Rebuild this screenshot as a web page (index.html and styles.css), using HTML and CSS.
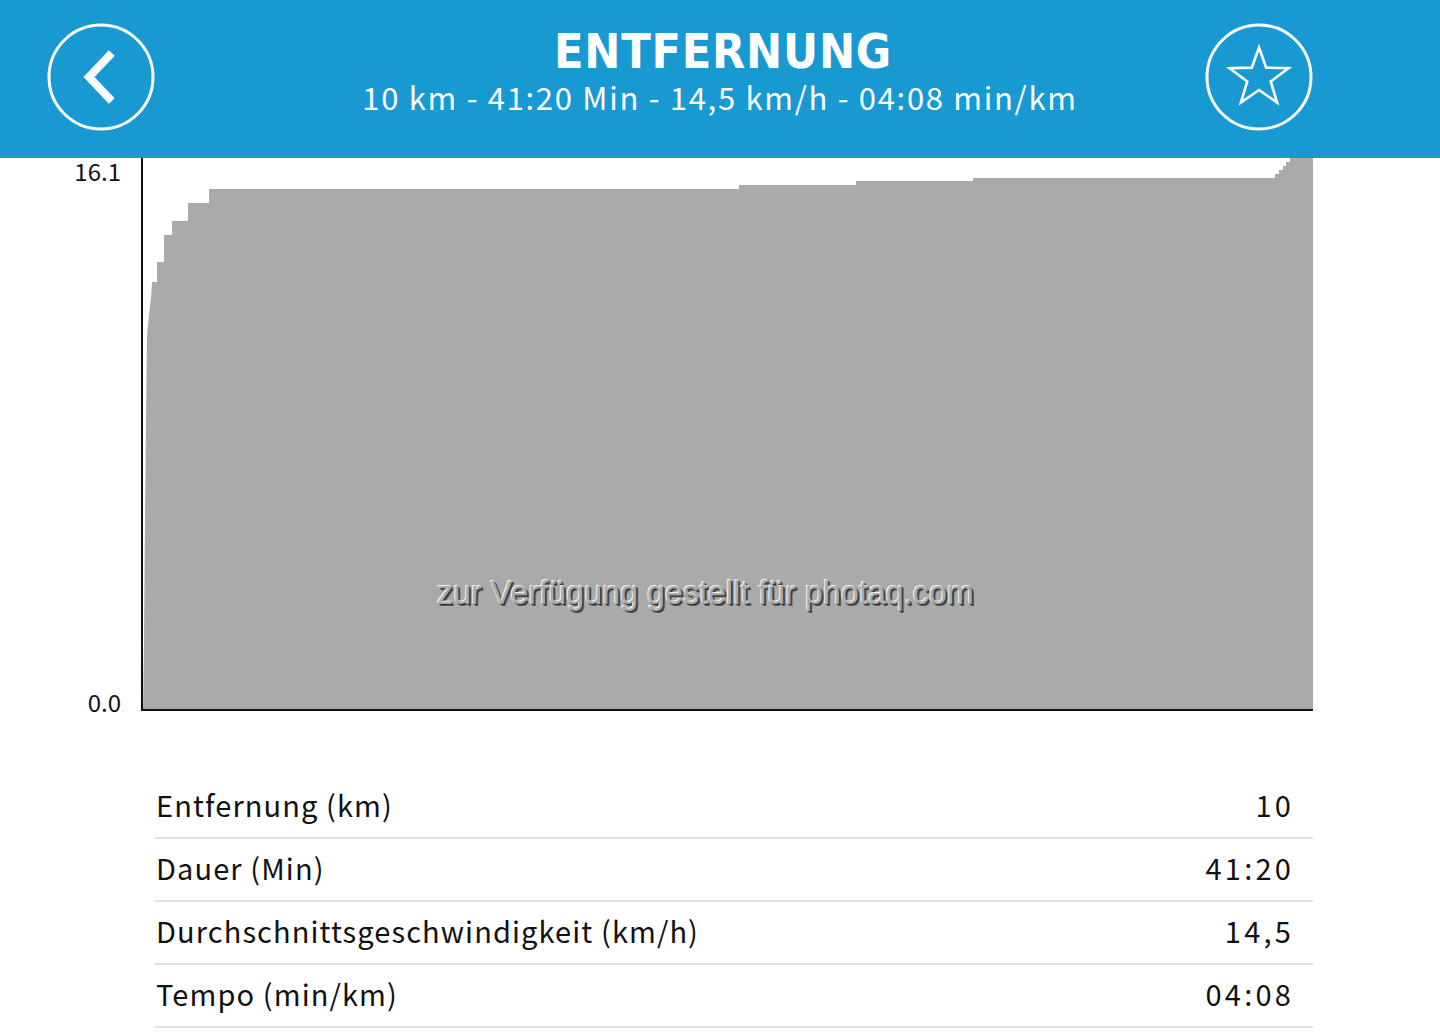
FILE: index.html
```html
<!DOCTYPE html>
<html lang="de">
<head>
    <meta charset="UTF-8">
    <meta name="viewport" content="width=device-width, initial-scale=1.0">
    <title>Entfernung</title>
    <link rel="stylesheet" href="styles.css">
</head>
<body>
    <header class="top-bar">
        <div class="bar-left">
            <button class="round-btn" aria-label="Zurück">
                <svg width="110" height="110" viewBox="0 0 110 110">
                    <circle cx="55" cy="55" r="52" fill="none" stroke="#fff" stroke-width="3"/>
                    <polyline points="63,34 43,55 63,76" fill="none" stroke="#fff" stroke-width="8" stroke-linecap="square" stroke-linejoin="miter"/>
                </svg>
            </button>
        </div>
        <div class="bar-title">
            <h1>ENTFERNUNG</h1>
            <p>10 km - 41:20 Min - 14,5 km/h - 04:08 min/km</p>
        </div>
        <div class="bar-right">
            <button class="round-btn" aria-label="Favorit">
                <svg width="110" height="110" viewBox="0 0 110 110">
                    <circle cx="55" cy="55" r="52" fill="none" stroke="#fff" stroke-width="3"/>
                    <polygon points="55,25.5 62.2,45.6 84.5,46.2 66.7,59.5 73.1,80.5 55,68 36.9,80.5 43.3,59.5 25.5,46.2 47.8,45.6" fill="none" stroke="#fff" stroke-width="2.6" stroke-linejoin="miter"/>
                </svg>
            </button>
        </div>
    </header>

    <section class="chart">
        <div class="y-labels">
            <span>16.1</span>
            <span>0.0</span>
        </div>
        <div class="plot">
            <svg width="1173" height="555" viewBox="141 158 1173 555">
                <polygon fill="#aaaaaa" points="143,710 144,640 145,520 146,420 147,335 149,315 151,298 152,282 157,282 157,262 164,262 164,235 172,235 172,221 188,221 188,203 209,203 209,189 739,189 739,185 856,185 856,181 973,181 973,178 1275,178 1275,174 1279,174 1279,170 1283,170 1283,166 1286,166 1286,162 1290,162 1290,158 1313,158 1313,710"/>
                <line x1="142" y1="158" x2="142" y2="711" stroke="#111" stroke-width="2"/>
                <line x1="141" y1="710" x2="1313" y2="710" stroke="#111" stroke-width="2"/>
            </svg>
            <div class="watermark">zur Verfügung gestellt für photaq.com</div>
        </div>
    </section>

    <section class="stats">
        <div class="stat-row">
            <span>Entfernung (km)</span>
            <span class="value">10</span>
        </div>
        <div class="stat-row">
            <span>Dauer (Min)</span>
            <span class="value">41:20</span>
        </div>
        <div class="stat-row">
            <span>Durchschnittsgeschwindigkeit (km/h)</span>
            <span class="value">14,5</span>
        </div>
        <div class="stat-row">
            <span>Tempo (min/km)</span>
            <span class="value">04:08</span>
        </div>
    </section>
</body>
</html>
```

FILE: styles.css
```css
body {
    margin: 0;
    font-family: "Noto Sans CJK JP", "Noto Sans", sans-serif;
    background-color: #fff;
    color: #111;
    overflow: hidden;
}
.top-bar {
    height: 158px;
    background-color: #1899d1;
    display: grid;
    grid-template-columns: 1fr auto 1fr;
    align-items: center;
    color: #fff;
}
.bar-left {
    padding-left: 46px;
    padding-bottom: 4px;
}
.bar-right {
    justify-self: end;
    padding-right: 126px;
    padding-bottom: 4px;
}
.round-btn {
    display: block;
    width: 110px;
    height: 110px;
    padding: 0;
    border: none;
    background: none;
    cursor: pointer;
}
.round-btn svg {
    display: block;
}
.bar-title {
    text-align: center;
    padding-bottom: 20px;
}
.bar-title h1 {
    margin: 0 0 0 6px;
    font-family: "DejaVu Sans Condensed", "DejaVu Sans", sans-serif;
    font-weight: bold;
    font-size: 48px;
    line-height: 56px;
    letter-spacing: 0.8px;
}
.bar-title p {
    margin: 0;
    font-size: 31px;
    line-height: 36px;
    letter-spacing: 1.7px;
}
.chart {
    display: flex;
    height: 555px;
}
.y-labels {
    width: 121px;
    padding-right: 20px;
    display: flex;
    flex-direction: column;
    justify-content: space-between;
    align-items: flex-end;
    font-size: 24px;
    line-height: 30px;
    margin-top: -2px;
    margin-bottom: -4px;
}
.plot {
    position: relative;
    width: 1173px;
}
.plot svg {
    display: block;
}
.watermark {
    position: absolute;
    left: 296px;
    top: 417px;
    font-family: "Liberation Sans", Arial, sans-serif;
    font-size: 32.3px;
    color: #aaaaaa;
    text-shadow: -1px -1px 0 #f4f4f4, 1px 1px 0 #333, 2px 2px 0 #555;
}
.stats {
    margin: 63px 127px 0 155px;
}
.stat-row {
    border-bottom: 2px solid #e2e2e2;
    display: flex;
    justify-content: space-between;
    align-items: center;
    padding: 0 19px 5px 1px;
    box-sizing: border-box;
    height: 63px;
    font-size: 29px;
    letter-spacing: 1.1px;
}
.stat-row .value {
    letter-spacing: 3.2px;
}
```
